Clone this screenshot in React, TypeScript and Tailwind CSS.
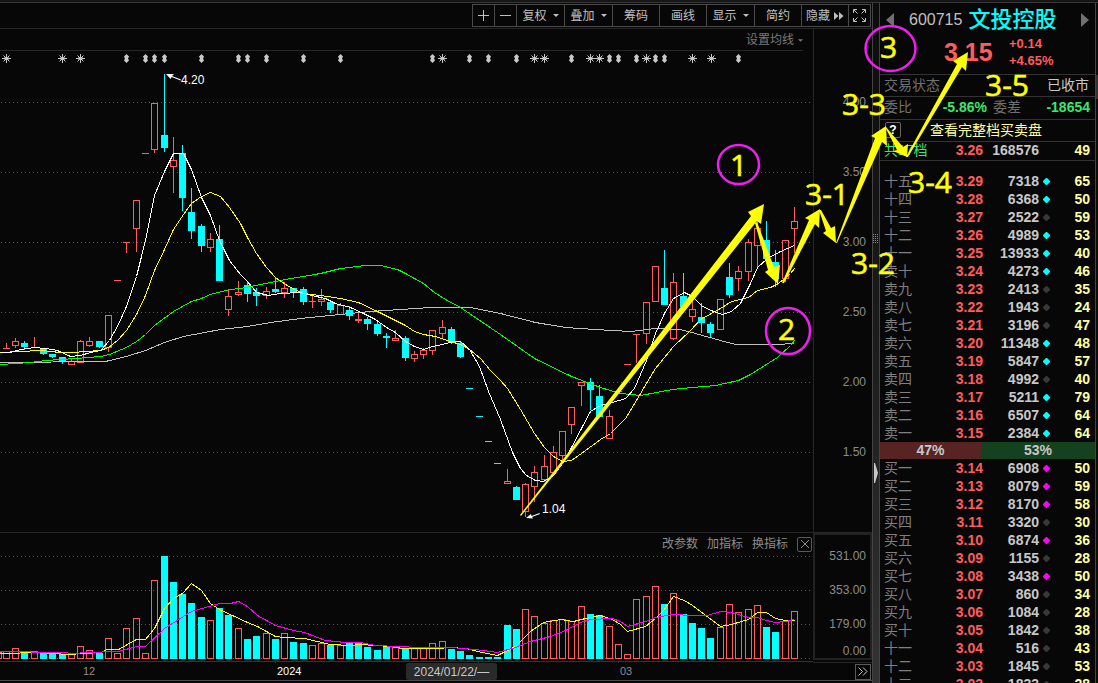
import clsx from "clsx";

type Tone = "r" | "c";
// [candle tone, open/close top, open/close bottom, high, low, volume tone, volume top]
type Bar = [Tone, number, number, number, number, Tone, number];

const BARS: Bar[] = [
  ["r", 348, 349, 343, 349, "r", 652],
  ["r", 341, 346, 338, 348, "r", 649],
  ["c", 343, 347, 341, 350, "c", 653],
  ["r", 347, 348, 337, 348, "r", 652],
  ["c", 348, 354, 348, 355, "c", 652],
  ["c", 354, 357, 354, 358, "c", 654],
  ["c", 357, 362, 357, 364, "c", 654],
  ["r", 361, 365, 358, 365, "r", 655],
  ["r", 341, 363, 340, 363, "r", 647],
  ["r", 341, 346, 337, 347, "r", 651],
  ["c", 341, 347, 341, 348, "c", 653],
  ["r", 315, 348, 315, 352, "r", 639],
  ["r", 280, 281, 280, 281, "r", 654],
  ["r", 242, 243, 242, 253, "r", 629],
  ["r", 200, 229, 200, 252, "r", 619],
  ["r", 153, 154, 153, 154, "r", 654],
  ["r", 103, 150, 103, 153, "r", 581],
  ["c", 135, 148, 74, 152, "c", 556],
  ["r", 160, 167, 137, 193, "c", 582],
  ["c", 153, 198, 145, 211, "c", 594],
  ["c", 212, 231, 188, 239, "c", 603],
  ["c", 226, 246, 224, 252, "c", 617],
  ["r", 239, 248, 233, 252, "r", 621],
  ["c", 239, 281, 225, 281, "c", 608],
  ["r", 296, 310, 289, 316, "c", 615],
  ["r", 292, 295, 281, 296, "r", 629],
  ["c", 285, 294, 282, 302, "c", 639],
  ["c", 292, 296, 288, 306, "c", 636],
  ["r", 291, 296, 287, 299, "r", 634],
  ["c", 289, 292, 278, 293, "c", 639],
  ["r", 288, 293, 282, 298, "r", 634],
  ["c", 288, 292, 288, 298, "c", 642],
  ["c", 289, 302, 287, 305, "c", 643],
  ["r", 301, 302, 296, 308, "r", 646],
  ["r", 299, 302, 289, 306, "r", 644],
  ["c", 302, 310, 301, 313, "c", 645],
  ["r", 305, 315, 303, 315, "r", 646],
  ["c", 310, 316, 306, 320, "c", 643],
  ["r", 319, 321, 313, 323, "c", 643],
  ["c", 319, 324, 317, 330, "c", 647],
  ["c", 324, 334, 322, 336, "c", 650],
  ["c", 336, 338, 333, 348, "c", 646],
  ["r", 338, 341, 330, 341, "r", 647],
  ["c", 338, 358, 336, 361, "c", 648],
  ["r", 354, 359, 351, 362, "r", 649],
  ["r", 350, 355, 348, 359, "r", 649],
  ["r", 330, 351, 330, 355, "r", 644],
  ["r", 327, 334, 320, 338, "r", 642],
  ["c", 329, 343, 327, 344, "c", 649],
  ["c", 343, 357, 342, 358, "c", 651],
  ["c", 388, 389, 388, 389, "c", 655],
  ["c", 416, 417, 416, 417, "c", 657],
  ["c", 441, 442, 441, 442, "c", 657],
  ["c", 463, 464, 463, 464, "c", 657],
  ["r", 481, 484, 469, 484, "c", 625],
  ["c", 487, 500, 486, 500, "c", 629],
  ["r", 484, 512, 483, 517, "r", 610],
  ["r", 472, 487, 466, 502, "r", 617],
  ["r", 466, 480, 455, 482, "r", 624],
  ["r", 452, 473, 446, 473, "r", 621],
  ["r", 431, 456, 431, 460, "r", 620],
  ["r", 407, 425, 407, 434, "r", 622],
  ["r", 382, 386, 382, 406, "r", 607],
  ["c", 382, 390, 378, 410, "c", 614],
  ["c", 396, 417, 385, 417, "c", 615],
  ["r", 416, 439, 410, 439, "r", 627],
  ["r", 391, 392, 391, 392, "r", 645],
  ["r", 364, 365, 364, 365, "r", 655],
  ["r", 334, 335, 334, 363, "r", 600],
  ["r", 302, 334, 302, 344, "r", 597],
  ["r", 266, 302, 266, 302, "r", 587],
  ["c", 288, 305, 250, 305, "c", 604],
  ["r", 282, 339, 273, 340, "r", 594],
  ["c", 296, 307, 273, 307, "c", 614],
  ["r", 309, 317, 300, 322, "c", 623],
  ["c", 317, 323, 303, 333, "c", 628],
  ["c", 324, 333, 322, 337, "c", 638],
  ["r", 299, 330, 299, 330, "r", 628],
  ["c", 277, 295, 263, 298, "r", 605],
  ["r", 271, 279, 266, 291, "r", 613],
  ["r", 242, 272, 239, 281, "r", 610],
  ["r", 228, 246, 221, 267, "r", 606],
  ["c", 240, 259, 221, 259, "c", 627],
  ["c", 262, 279, 250, 287, "c", 632],
  ["r", 240, 279, 240, 282, "r", 622],
  ["r", 221, 229, 207, 253, "r", 612],
];

const PRICE_LINES = [
  {
    color: "#c0c0c0",
    points:
      "0,362 105,361 126,356 145,350 164,342 183,336 220,329 247,326 270,322 300,318 340,314 370,311 400,309 430,307 470,307 500,313 535,322 565,327 595,329 630,331 655,328 680,329 695,333 720,340 735,344 775,344 794,343",
  },
  {
    color: "#00ff00",
    points:
      "0,364 30,362 45,360 75,358 100,356 109,354 126,347 136,341 145,334 154,325 173,311 191,301 201,298 210,294 229,289 240,288 285,279 320,273 340,268 365,265 380,265 397,269 405,273 423,283 434,292 445,299 460,307 500,334 534,358 571,376 600,387 620,393 640,395 672,389 692,387 715,385 738,380 750,374 777,357 790,345 794,340",
  },
  {
    color: "#ffff00",
    points:
      "0,352 40,350 60,352 72,352 100,350 108,347 117,340 126,330 136,314 145,295 154,270 164,249 173,229 183,214 191,203 201,196 210,192 220,196 229,207 240,223 247,237 256,253 266,267 275,277 285,284 294,289 303,293 320,295 340,298 358,302 377,311 395,320 405,325 414,331 423,334 435,336 450,341 460,344 469,349 480,358 490,370 500,380 507,388 520,409 534,433 544,447 553,456 562,461 571,460 581,453 600,439 610,433 625,418 636,400 643,388 655,368 673,346 690,330 700,319 720,308 731,301 748,297 757,290 770,287 778,283 790,273 794,268",
  },
  {
    color: "#ffffff",
    points:
      "0,352 10,352 20,349 34,347 45,348 57,350 70,356 80,355 90,352 100,350 109,340 118,324 126,306 136,276 145,240 154,195 164,171 173,153 183,153 191,169 201,197 210,215 219,240 229,260 240,274 247,281 256,292 268,295 280,293 300,292 311,295 325,298 335,303 350,307 363,313 375,319 386,327 395,332 405,341 414,346 423,349 432,346 442,344 453,341 460,341 469,349 479,366 488,391 500,419 512,452 520,468 526,475 535,480 543,481 553,475 562,463 571,447 581,428 590,411 600,405 612,402 625,398 634,388 646,360 655,333 664,313 673,298 684,292 692,296 702,306 713,311 722,314 731,311 740,303 750,283 757,267 767,258 780,251 794,245",
  },
];

const VOLUME_LINES = [
  {
    color: "#ffff00",
    points:
      "0,653 40,652 67,654 100,652 107,649 118,649 136,639 145,639 154,628 164,608 173,598 182,593 191,583 201,590 210,603 219,609 247,622 257,626 275,636 284,637 304,638 330,644 350,645 360,644 390,646 402,648 437,648 450,647 465,648 482,652 497,655 515,646 530,631 543,622 560,619 573,621 585,618 600,615 612,619 620,624 627,631 645,626 655,618 663,610 673,596 684,600 692,605 720,626 731,624 748,619 757,612 766,612 775,618 785,620 794,620",
  },
  {
    color: "#ff00ff",
    points:
      "0,651 60,652 75,653 85,652 118,651 136,646 145,646 164,628 191,611 219,603 230,603 238,601 247,606 257,615 275,625 293,630 304,632 325,640 345,642 360,642 375,645 420,647 450,647 475,649 497,652 515,647 530,641 550,636 565,630 580,622 590,619 612,618 620,621 627,626 645,621 655,617 673,614 692,615 707,615 720,611 731,612 748,617 757,617 766,620 775,622 785,621 794,619",
  },
];

const STARS = [6, 62, 80, 442, 534, 544, 590, 599, 646, 692, 711];
const TICKS = [
  126, 145, 154, 164, 201, 238, 247, 266, 303, 340, 432, 469, 488, 516, 571,
  609, 618, 636, 655, 664, 738,
];

// [label, price, volume, has activity dot, orders]
type Level = [string, string, number, boolean, number];

const ASKS: Level[] = [
  ["十五", "3.29", 7318, true, 65],
  ["十四", "3.28", 6368, true, 50],
  ["十三", "3.27", 2522, false, 59],
  ["十二", "3.26", 4989, true, 53],
  ["十一", "3.25", 13933, true, 40],
  ["卖十", "3.24", 4273, true, 46],
  ["卖九", "3.23", 2413, false, 35],
  ["卖八", "3.22", 1943, false, 24],
  ["卖七", "3.21", 3196, false, 47],
  ["卖六", "3.20", 11348, true, 48],
  ["卖五", "3.19", 5847, true, 57],
  ["卖四", "3.18", 4992, false, 40],
  ["卖三", "3.17", 5211, true, 79],
  ["卖二", "3.16", 6507, true, 64],
  ["卖一", "3.15", 2384, true, 64],
];

const BIDS: Level[] = [
  ["买一", "3.14", 6908, true, 50],
  ["买二", "3.13", 8079, true, 59],
  ["买三", "3.12", 8170, true, 58],
  ["买四", "3.11", 3320, false, 30],
  ["买五", "3.10", 6874, true, 36],
  ["买六", "3.09", 1155, false, 28],
  ["买七", "3.08", 3438, true, 50],
  ["买八", "3.07", 860, false, 34],
  ["买九", "3.06", 1084, false, 28],
  ["买十", "3.05", 1842, false, 38],
  ["十一", "3.04", 516, false, 43],
  ["十二", "3.03", 1845, false, 53],
  ["十三", "3.02", 1833, false, 28],
];

const barX = (i: number) => Math.floor(6.45 + 9.27 * i);
const toneColor = (tone: Tone) => (tone === "r" ? "#ff5c5c" : "#00ffff");

export default function App() {
  return (
    <div className="relative flex h-screen flex-col overflow-hidden bg-[#070707] font-['Liberation_Sans','Noto_Sans_CJK_SC',sans-serif] text-xs text-[#8c8c8c]">
      <div className="h-[3px] shrink-0 border-b border-[#383838] bg-[#161616]" />
      <div className="flex min-h-0 flex-1">
        <main className="flex min-w-0 flex-1 flex-col">
          <Toolbar />
          <PricePanel />
          <VolumePanel />
          <DateAxis />
        </main>
        <Splitter />
        <QuotePanel />
        <div className="flex w-[2px] flex-col bg-[#0c0c0c] pt-[72px]">
          <div className="h-6 bg-[#333]" />
        </div>
      </div>
      <Annotations />
    </div>
  );
}

function Toolbar() {
  return (
    <div className="flex h-[26px] shrink-0 items-start justify-end border-b border-[#262626] pt-px pr-px">
      <div className="flex h-[23px] border-y border-r border-[#4a4a4a] text-[#c0c0c0]">
        <ToolButton className="w-[22px]" label="放大">
          <svg width="11" height="11" viewBox="0 0 11 11" stroke="currentColor">
            <path d="M5.5 0v11M0 5.5h11" />
          </svg>
        </ToolButton>
        <ToolButton className="w-[22px]" label="缩小">
          <svg width="11" height="11" viewBox="0 0 11 11" stroke="currentColor">
            <path d="M0 5.5h11" />
          </svg>
        </ToolButton>
        <ToolButton className="w-12">
          复权
          <Caret />
        </ToolButton>
        <ToolButton className="w-12">
          叠加
          <Caret />
        </ToolButton>
        <ToolButton className="w-[47px]">筹码</ToolButton>
        <ToolButton className="w-[47px]">画线</ToolButton>
        <ToolButton className="w-12">
          显示
          <Caret />
        </ToolButton>
        <ToolButton className="w-[47px]">简约</ToolButton>
        <ToolButton className="w-[47px]">
          隐藏
          <svg className="ml-1" width="10" height="8" viewBox="0 0 10 8" fill="currentColor">
            <path d="M0 0l4.500 4L0 8zM5 0l4.500 4L5 8z" />
          </svg>
        </ToolButton>
        <ToolButton className="w-[22px]" label="全屏">
          <svg width="13" height="13" viewBox="0 0 13 13" fill="none" stroke="currentColor">
            <path d="M.5 4V.5H4M9 .5h3.500V4M12.500 9v3.500H9M4 12.500H.5V9M1 1l3.500 3.500M12 1L8.500 4.500M12 12L8.500 8.500M1 12l3.500-3.500" />
          </svg>
        </ToolButton>
      </div>
    </div>
  );
}

function ToolButton({
  className,
  label,
  children,
}: {
  className: string;
  label?: string;
  children: React.ReactNode;
}) {
  return (
    <button
      type="button"
      aria-label={label}
      className={clsx(
        "flex items-center justify-center whitespace-nowrap border-l border-[#4a4a4a]",
        className,
      )}
    >
      {children}
    </button>
  );
}

function Caret() {
  return (
    <svg className="ml-1.5" width="6" height="3" viewBox="0 0 6 3" fill="currentColor">
      <path d="M0 0h6L3 3z" />
    </svg>
  );
}

function Lines({ lines }: { lines: { color: string; points: string }[] }) {
  return (
    <g fill="none" shapeRendering="crispEdges" transform="translate(.5 .5)">
      {lines.map((line) => (
        <polyline key={line.color} points={line.points} stroke={line.color} />
      ))}
    </g>
  );
}

function Grid({ rows }: { rows: number[] }) {
  return (
    <g stroke="#5a5a5a" strokeDasharray="1 3" shapeRendering="crispEdges">
      {rows.map((y) => (
        <line key={y} x1="1" x2="813" y1={y + 0.5} y2={y + 0.5} />
      ))}
    </g>
  );
}

function Candle({ bar, x }: { bar: Bar; x: number }) {
  const [tone, top, bottom, high, low] = bar;
  const color = toneColor(tone);
  const hollow = tone === "r" && bottom - top > 2;

  return (
    <g fill={color} shapeRendering="crispEdges">
      {high < top && <rect x={x} y={high} width="1" height={top - high} />}
      {low > bottom && <rect x={x} y={bottom} width="1" height={low - bottom} />}
      {hollow ? (
        <rect
          x={x - 2.5}
          y={top + 0.5}
          width="6"
          height={bottom - top - 1}
          fill="none"
          stroke={color}
        />
      ) : (
        <rect x={x - 3} y={top} width="7" height={bottom - top} />
      )}
    </g>
  );
}

function PricePanel() {
  return (
    <section className="flex shrink-0 border-b border-[#262626]">
      <div className="min-w-0 flex-1">
        <div className="mr-[10px] flex h-[22px] items-center justify-end border-b border-[#262626] pt-px">
          <button type="button" className="flex items-center gap-0 text-[#7a7a7a]">
            设置均线
            <svg className="ml-1" width="5" height="3" viewBox="0 0 6 3" fill="currentColor">
              <path d="M0 0h6L3 3z" />
            </svg>
          </button>
        </div>
        <svg className="block h-auto w-full" viewBox="0 51 813 481">
          <Grid rows={[102, 172, 242, 312, 382, 452]} />
          <g stroke="#c8c8c8">
            {STARS.map((x) => (
              <path
                key={x}
                transform={`translate(${x + 0.5} 58.5)`}
                d="M0-4.500v9M-4.500 0h9M-3-3l6 6M3-3l-6 6M-2-1h4M-2 1h4"
              />
            ))}
          </g>
          <g fill="#c8c8c8">
            {TICKS.map((x) => (
              <path
                key={x}
                transform={`translate(${x + 0.5} 58.5)`}
                d="M0-4.500l2.500 2.500-1 2 1 2L0 4.500-2.500 2l1-2-1-2z"
              />
            ))}
          </g>
          {BARS.map((bar, i) => (
            <Candle key={i} bar={bar} x={barX(i)} />
          ))}
          <Lines lines={PRICE_LINES} />
          <g fill="#fff" fontSize="12">
            <path d="M166 74l8 0-2 2 9 3.500-.4 1-9-3.500-1 2z" />
            <text x="181" y="84">4.20</text>
            <path d="M526 518l5-4 .5 2 8-3 .4 1-8 3 1.500 1.500z" />
            <text x="542" y="513">1.04</text>
          </g>
        </svg>
      </div>
      <div className="w-[59px] border-l border-[#262626] pt-[38px] pr-1.5">
        {["4.00", "3.50", "3.00", "2.50", "2.00", "1.50"].map((price) => (
          <div key={price} className="flex h-[70px] items-center justify-end">
            {price}
          </div>
        ))}
      </div>
    </section>
  );
}

function VolumePanel() {
  return (
    <section className="flex shrink-0">
      <div className="min-w-0 flex-1">
        <div className="flex h-[22px] items-center justify-end gap-[9px] pr-px">
          <button type="button">改参数</button>
          <button type="button">加指标</button>
          <button type="button">换指标</button>
          <button
            type="button"
            aria-label="关闭"
            className="flex size-[15px] items-center justify-center rounded-[2px] border border-[#5a5a5a]"
          >
            <svg width="8" height="8" viewBox="0 0 8 8" stroke="currentColor">
              <path d="M0 0l8 8M8 0L0 8" />
            </svg>
          </button>
        </div>
        <svg className="block h-auto w-full" viewBox="0 555 813 108">
          <Grid rows={[556, 590, 624, 658]} />
          <g shapeRendering="crispEdges">
            <rect x="-4.500" y="652.500" width="6" height="6" fill="none" stroke="#ff5c5c" />
            {BARS.map(([, , , , , tone, top], i) =>
              tone === "r" ? (
                <rect
                  key={i}
                  x={barX(i) - 2.5}
                  y={top - 0.5}
                  width="6"
                  height={659 - top}
                  fill="none"
                  stroke={toneColor(tone)}
                />
              ) : (
                <rect
                  key={i}
                  x={barX(i) - 3}
                  y={top}
                  width="7"
                  height={659 - top}
                  fill={toneColor(tone)}
                />
              ),
            )}
            <path d="M0 661.500h813M80.500 661v2M275.500 661v2M478.500 661v2M618.500 661v2" stroke="#333" />
          </g>
          <Lines lines={VOLUME_LINES} />
        </svg>
      </div>
      <div className="w-[59px] border-b border-[#262626] pb-px">
        <div className="h-[127px] border-2 border-[#222] pt-1 pr-1">
          <div className="flex h-[34px] items-center justify-end">531.00</div>
          <div className="flex h-[34px] items-center justify-end">353.00</div>
          <div className="flex h-[34px] items-center justify-end">179.00</div>
          <div className="flex h-5 items-center justify-end">0.00</div>
        </div>
      </div>
    </section>
  );
}

function DateAxis() {
  return (
    <div className="flex h-[18px] shrink-0 items-center border-b border-[#4a4a4a] text-[11px]">
      <span className="ml-[83px] w-[194px]">12</span>
      <span className="w-[129px] text-white">2024</span>
      <span className="flex h-full w-[91px] items-center justify-center rounded-[2px] bg-[#2a2a2a] text-xs text-[#c8c8c8]">
        2024/01/22/—
      </span>
      <span className="ml-[123px]">03</span>
      <button
        type="button"
        aria-label="更多"
        className="mr-px ml-auto flex size-4 items-center justify-center border border-[#5a5a5a] text-[#c8c8c8]"
      >
        <svg width="10" height="9" viewBox="0 0 10 9" fill="none" stroke="currentColor">
          <path d="M.5.5l4 4-4 4M5 .5l4 4-4 4" />
        </svg>
      </button>
    </div>
  );
}

function Splitter() {
  return (
    <div className="flex w-2 shrink-0 flex-col items-center border-x border-[#444] bg-linear-to-b from-[#0c0c0c] via-[#1c1c1c] to-[#333] pt-[231px]">
      <svg width="6" height="9" viewBox="0 0 6 9" fill="#888">
        <path d="M0 0h1v1H0zM2 0h1v1H2zM4 0h1v1H4zM0 2h1v1H0zM2 2h1v1H2zM4 2h1v1H4zM0 4h1v1H0zM2 4h1v1H2zM4 4h1v1H4zM0 6h1v1H0zM2 6h1v1H2zM4 6h1v1H4zM0 8h1v1H0zM2 8h1v1H2zM4 8h1v1H4z" />
      </svg>
      <svg className="mt-[220px]" width="6" height="20" viewBox="0 0 6 20" fill="#c8c8c8">
        <path d="M1 0h1l3 10-3 10H1z" />
      </svg>
    </div>
  );
}

function QuotePanel() {
  return (
    <aside className="w-[216px] shrink-0 overflow-hidden border-r border-[#444]">
      <header className="h-[72px] border-b border-[#333] px-1.5">
        <div className="flex h-8 items-center pt-px">
          <button type="button" aria-label="上一只" className="text-[#707070]">
            <svg width="8" height="14" viewBox="0 0 8 14" fill="currentColor">
              <path d="M8 0v14L0 7z" />
            </svg>
          </button>
          <span className="ml-[15px] text-base text-[#c0c0c0]">600715</span>
          <h1 className="ml-1.5 text-[22px] leading-8 font-medium whitespace-nowrap text-[#00ffff]">
            文投控股
          </h1>
          <button type="button" aria-label="下一只" className="ml-auto text-[#707070]">
            <svg width="8" height="14" viewBox="0 0 8 14" fill="currentColor">
              <path d="M0 0v14l8-7z" />
            </svg>
          </button>
        </div>
        <div className="flex items-center pl-[58px] font-bold text-[#ff5c5c]">
          <span className="w-[65px] text-[25px] leading-8">3.15</span>
          <span className="text-[13px] leading-[17px]">
            +0.14
            <br />
            +4.65%
          </span>
        </div>
      </header>
      <div className="flex h-[22px] items-center justify-between border-b border-[#333] pr-1.5 pb-px pl-1 text-sm leading-5">
        <span className="text-[#707070]">交易状态</span>
        <span className="text-[#c8c8c8]">已收市</span>
      </div>
      <div className="flex h-[23px] items-center border-b border-[#333] pr-[5px] pb-0.5 pl-1 text-sm leading-5">
        <span className="w-7 text-[#707070]">委比</span>
        <b className="w-[75px] text-right text-[#3ce66c]">-5.86%</b>
        <span className="ml-1.5 text-[#707070]">委差</span>
        <b className="ml-auto text-[#3ce66c]">-18654</b>
      </div>
      <div className="flex h-[22px] items-center border-b border-[#333] px-[5px] pb-0.5 text-sm leading-5">
        <button
          type="button"
          className="size-4 rounded-[2px] border border-[#666] text-xs leading-[14px] font-bold text-white"
        >
          ?
        </button>
        <a href="#depth" className="ml-[29px] text-[#ffffa0]">
          查看完整档买卖盘
        </a>
      </div>
      <div className="mb-[11px] grid h-[19px] grid-cols-[43px_56px_56px_1fr] border-b border-[#333] pr-[5px] pl-1 text-right text-sm leading-4 font-bold">
        <span className="text-left font-normal whitespace-nowrap text-[#3ce66c]">共17档</span>
        <span className="text-[#ff5c5c]">3.26</span>
        <span className="text-[#c8c8c8]">168576</span>
        <span className="text-[#ffffa0]">49</span>
      </div>
      <Levels levels={ASKS} dot="text-[#00ffff]" />
      <div className="flex h-[17px] text-center text-sm leading-[17px] font-bold text-[#c8c8c8]">
        <div className="w-[47%] bg-[#572323]">47%</div>
        <div className="w-[53%] bg-[#14421f]">53%</div>
      </div>
      <Levels levels={BIDS} dot="text-[#ff00ff]" />
    </aside>
  );
}

function Levels({ levels, dot }: { levels: Level[]; dot: string }) {
  return (
    <table className="w-full table-fixed text-right text-sm font-bold">
      <colgroup>
        <col className="w-[47px]" />
        <col className="w-14" />
        <col className="w-14" />
        <col className="w-[14px]" />
        <col />
      </colgroup>
      <tbody>
        {levels.map(([label, price, volume, active, orders]) => (
          <tr key={price} className="h-[18px] leading-[18px]">
            <th scope="row" className="pl-1 text-left font-normal text-[#808080]">
              {label}
            </th>
            <td className="text-[#ff5c5c]">{price}</td>
            <td className="text-[#c8c8c8]">{volume}</td>
            <td className={active ? dot : "text-[#383838]"}>
              <svg className="mx-auto block" width="7" height="7" viewBox="0 0 7 7" fill="currentColor">
                <path d="M3 0h1l3 3v1L4 7H3L0 4V3z" />
              </svg>
            </td>
            <td className="pr-[5px] text-[#ffffa0]">{orders}</td>
          </tr>
        ))}
      </tbody>
    </table>
  );
}

// Hand-drawn wave count laid over the chart and the quote panel
function Annotations() {
  return (
    <svg
      className="pointer-events-none absolute top-0 left-0 h-auto w-full font-['Open_Sans',sans-serif]"
      viewBox="0 0 1098 683"
    >
      <g fill="#ffff00">
        <path d="M520 515L751 216 748 212 764 204 761 224 757 221 521 516z" />
        <path d="M755 223L768 270 765 272 778 284 780 265 774 267 757 222z" />
        <path d="M782 283L809 220 805 218 820 209 819 228 815 224 784 283z" />
        <path d="M819 210L826 231 823 233 836 243 835 226 831 228 821 210z" />
        <path d="M836 243L875 138 871 136 886 126 887 146 882 142 837 243z" />
        <path d="M885 127L897 150 893 151 907 157 908 144 903 147 886 127z" />
        <path d="M906 157L957 64 953 61 968 52 966 71 962 67 908 157z" />
      </g>
      <g fill="none" stroke="#f01ef0" strokeWidth="2.500">
        <ellipse cx="738.500" cy="164.500" rx="20.500" ry="19.500" />
        <ellipse cx="788" cy="331" rx="22" ry="23" />
        <ellipse cx="890.500" cy="48.500" rx="25" ry="22.500" />
      </g>
      <g fill="#ffff00" stroke="#ffff00" strokeWidth=".6" fontSize="30">
        <text x="730" y="176">1</text>
        <text x="778" y="340">2</text>
        <text x="880" y="58">3</text>
        <text x="805" y="205">3-1</text>
        <text x="851" y="274">3-2</text>
        <text x="842" y="115">3-3</text>
        <text x="908" y="193">3-4</text>
        <text x="985" y="96">3-5</text>
      </g>
    </svg>
  );
}
